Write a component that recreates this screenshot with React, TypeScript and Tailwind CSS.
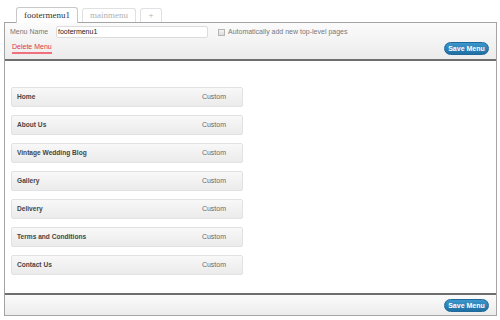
import React from "react";

const items = [
  "Home",
  "About Us",
  "Vintage Wedding Blog",
  "Gallery",
  "Delivery",
  "Terms and Conditions",
  "Contact Us",
];

function SaveButton() {
  return (
    <button className="h-[13px] w-[45px] rounded-full bg-gradient-to-b from-[#3c97cc] to-[#1f6fa3] border border-[#1e6a9b] text-white font-bold text-[7px] leading-none flex items-center justify-center">
      Save Menu
    </button>
  );
}

export default function App() {
  return (
    <div className="w-[500px] h-[320px] bg-white font-['Liberation_Sans',Arial,sans-serif] overflow-hidden">
      {/* tabs */}
      <div className="h-[22px] flex items-end pl-[16px] gap-[4px] font-['Liberation_Serif',Georgia,serif] text-[9px]">
        <div className="relative z-10 mb-[-1px] h-[16px] w-[62px] bg-white border border-b-0 border-[#c8c8c8] rounded-t-[3px] flex items-center justify-center text-[#333]">
          footermenu1
        </div>
        <div className="h-[14px] w-[54px] bg-white border border-b-0 border-[#e0e0e0] rounded-t-[3px] flex items-center justify-center text-[#b0b0b0]">
          mainmenu
        </div>
        <div className="h-[14px] w-[22px] bg-white border border-b-0 border-[#e0e0e0] rounded-t-[3px] flex items-center justify-center text-[#b0b0b0]">
          +
        </div>
      </div>

      {/* box */}
      <div className="ml-[4px] w-[493px] border border-[#a4a4a4]">
        <div className="h-[38px] bg-gradient-to-b from-[#fbfbfb] to-[#ececec] border-b-2 border-[#6e6e6e] flex flex-col">
          <div className="flex items-center pl-[5px] pt-[3px] h-[15px]">
            <span className="text-[7px] text-[#777] w-[45px]">Menu Name</span>
            <div className="ml-[1px] h-[12px] w-[152px] bg-white border border-[#dcdcdc] rounded-[2px] flex items-center pl-[1px] text-[7px] text-[#222]">
              footermenu1
            </div>
            <div className="ml-[10px] h-[7px] w-[7px] border border-[#b5b5b5] bg-gradient-to-b from-[#f4f4f4] to-[#dcdcdc]" />
            <span className="ml-[3px] text-[7px] text-[#777]">Automatically add new top-level pages</span>
          </div>
          <div className="flex items-center justify-between pl-[7px] pr-[7px] pt-[4px]">
            <span className="text-[7px] text-[#e0344a] border-b-2 border-[#f0707f] leading-[8px] pb-[1px]">Delete Menu</span>
            <SaveButton />
          </div>
        </div>

        <div className="h-[232px] bg-white pt-[26px] pl-[6px] flex flex-col gap-[8px]">
          {items.map((it) => (
            <div
              key={it}
              className="h-[20px] w-[232px] rounded-[2px] border border-[#e2e2e2] bg-gradient-to-b from-[#f8f8f8] to-[#ebebeb] flex items-center justify-between pl-[5px] pr-[16px]"
            >
              <span className="text-[6.6px] font-bold text-[#464646]">{it}</span>
              <span className="text-[7px] text-[#6a6a6a]">Custom</span>
            </div>
          ))}
        </div>

        <div className="h-[22px] border-t-2 border-[#6e6e6e] bg-gradient-to-b from-[#fbfbfb] to-[#ececec] flex items-center justify-end pr-[7px]">
          <SaveButton />
        </div>
      </div>
    </div>
  );
}
